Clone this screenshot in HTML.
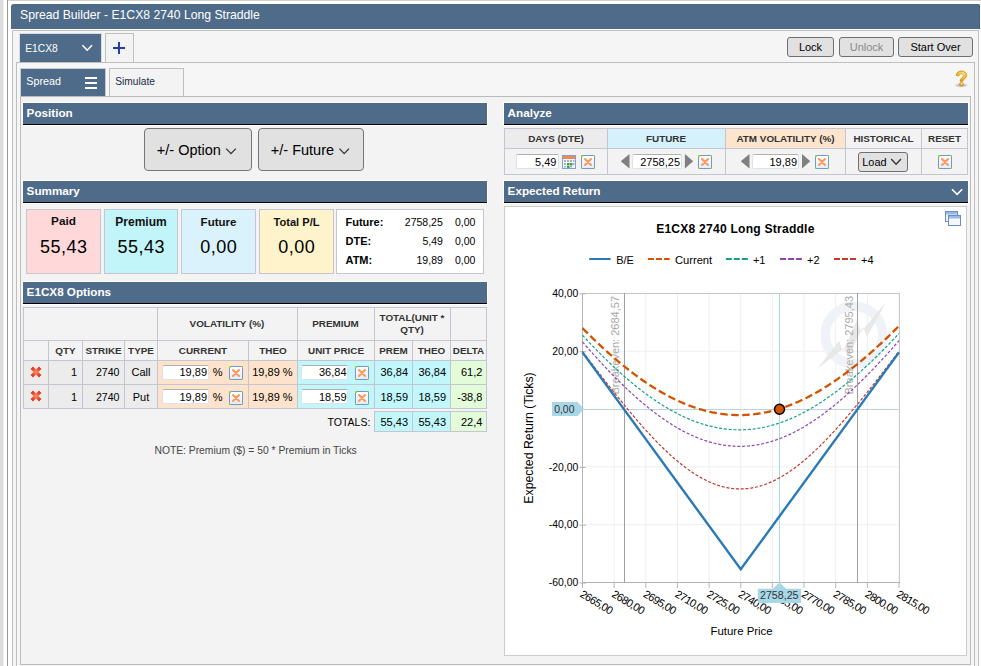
<!DOCTYPE html>
<html><head><meta charset="utf-8"><style>
html,body{margin:0;padding:0;width:981px;height:666px;overflow:hidden;font-family:'Liberation Sans', sans-serif;}
body{position:relative;}
</style></head><body>
<div style="position:absolute;left:0px;top:0px;width:981px;height:666px;background:#ffffff"></div>
<div style="position:absolute;left:0px;top:0px;width:3px;height:666px;background:#dcdcdc"></div>
<div style="position:absolute;left:3px;top:0px;width:1px;height:666px;background:#ececec"></div>
<div style="position:absolute;left:7px;top:0px;width:1px;height:666px;background:#9a9a9a"></div>
<div style="position:absolute;left:8px;top:0px;width:973px;height:1px;background:#d0d0d0"></div>
<div style="position:absolute;left:11px;top:4px;width:969px;height:25px;background:#4f6b8a;border-radius:3px 2px 0 0;box-shadow:inset -1px 0 0 #46607e"></div>
<div style="position:absolute;left:20px;top:8.97px;font-size:12.2px;line-height:12.2px;white-space:nowrap;color:#fff">Spread Builder - E1CX8 2740 Long Straddle</div>
<div style="position:absolute;left:12px;top:30px;width:965px;height:700px;background:#f5f5f5;border:1px solid #c0c0c0"></div>
<div style="position:absolute;left:19px;top:33px;width:81px;height:29px;background:#4f6b8a;border:1px solid #d8dde4;border-bottom:none"></div>
<div style="position:absolute;left:25.2px;top:43.88px;font-size:10.3px;line-height:10.3px;white-space:nowrap;color:#fff">E1CX8</div>
<svg style="position:absolute;left:0;top:0" width="981" height="666"><polyline points="82.4,45.3 87.2,50.2 92,45.3" fill="none" stroke="#fff" stroke-width="1.6"/></svg>
<div style="position:absolute;left:105px;top:33px;width:27px;height:29px;background:#f3f3f3;border:1px solid #c0c0c0;border-bottom:none"></div>
<div style="position:absolute;left:113px;top:47px;width:12px;height:2px;background:#1f3fae"></div>
<div style="position:absolute;left:118px;top:42px;width:2px;height:12px;background:#1f3fae"></div>
<div style="position:absolute;left:787px;top:37px;width:45px;height:18px;background:#e1e1e1;border:1px solid #707070;border-radius:3px"></div>
<div style="position:absolute;left:610.5px;width:400px;top:41.99px;font-size:11px;line-height:11px;white-space:nowrap;text-align:center;color:#000">Lock</div>
<div style="position:absolute;left:839px;top:37px;width:53px;height:18px;background:#e1e1e1;border:1px solid #707070;border-radius:3px"></div>
<div style="position:absolute;left:666.5px;width:400px;top:41.99px;font-size:11px;line-height:11px;white-space:nowrap;text-align:center;color:#8a8a8a">Unlock</div>
<div style="position:absolute;left:898px;top:37px;width:73px;height:18px;background:#e1e1e1;border:1px solid #707070;border-radius:3px"></div>
<div style="position:absolute;left:735.5px;width:400px;top:41.99px;font-size:11px;line-height:11px;white-space:nowrap;text-align:center;color:#000">Start Over</div>
<div style="position:absolute;left:16px;top:62px;width:957px;height:700px;background:#f6f6f6;border:1px solid #bebebe"></div>
<div style="position:absolute;left:20px;top:68px;width:86px;height:28px;background:#4f6b8a;border:1px solid #c8ccd2;border-bottom:none;box-sizing:border-box"></div>
<div style="position:absolute;left:26.3px;top:75.90px;font-size:10.75px;line-height:10.75px;white-space:nowrap;color:#fff">Spread</div>
<div style="position:absolute;left:85px;top:77px;width:12px;height:2px;background:#fff"></div>
<div style="position:absolute;left:85px;top:82px;width:12px;height:2px;background:#fff"></div>
<div style="position:absolute;left:85px;top:87px;width:12px;height:2px;background:#fff"></div>
<div style="position:absolute;left:109px;top:68px;width:73px;height:28px;background:#f3f3f3;border:1px solid #c0c0c0;border-bottom:none"></div>
<div style="position:absolute;left:115.3px;top:76.97px;font-size:10.2px;line-height:10.2px;white-space:nowrap;color:#1a2a48">Simulate</div>
<div style="position:absolute;left:20px;top:96px;width:949px;height:567px;background:#f3f3f3;border:1px solid #bbbbbb"></div>
<svg style="position:absolute;left:950px;top:68px" width="22" height="22" viewBox="0 0 22 22">
<defs><radialGradient id="hg" cx="0.6" cy="0.3" r="0.8"><stop offset="0" stop-color="#fff2b0"/><stop offset="0.45" stop-color="#f8c030"/><stop offset="1" stop-color="#e09000"/></radialGradient>
<radialGradient id="hs" cx="0.5" cy="0.5" r="0.5"><stop offset="0" stop-color="#b0b0b0"/><stop offset="0.6" stop-color="#d0d0d0"/><stop offset="1" stop-color="#f3f3f3" stop-opacity="0"/></radialGradient></defs>
<ellipse cx="11.2" cy="17.3" rx="8" ry="2.6" fill="url(#hs)"/>
<path d="M6.3 7.6 C6.3 4.6 8.6 3 11.3 3 C14.2 3 16.6 4.8 16.6 7.4 C16.6 10.2 13.4 10.8 12.8 13.2 L10 13.2 C10 10 13.6 9.4 13.6 7.6 C13.6 6.5 12.6 5.8 11.4 5.8 C10 5.8 9.2 6.6 9 7.8 Z" fill="url(#hg)" stroke="#c88400" stroke-width="0.7"/>
<circle cx="11.4" cy="16.2" r="1.8" fill="url(#hg)" stroke="#c88400" stroke-width="0.7"/>
</svg>
<div style="position:absolute;left:22px;top:102px;width:466px;height:24px;background:#fff"></div>
<div style="position:absolute;left:23px;top:103px;width:464px;height:21px;background:#4f6b8a"></div>
<div style="position:absolute;left:23px;top:124px;width:464px;height:1px;background:#000"></div>
<div style="position:absolute;left:26.6px;top:107.30px;font-size:11.7px;line-height:11.7px;white-space:nowrap;color:#fff;font-weight:bold">Position</div>
<div style="position:absolute;left:22px;top:180px;width:466px;height:24px;background:#fff"></div>
<div style="position:absolute;left:23px;top:181px;width:464px;height:21px;background:#4f6b8a"></div>
<div style="position:absolute;left:23px;top:202px;width:464px;height:1px;background:#000"></div>
<div style="position:absolute;left:26.6px;top:185.30px;font-size:11.7px;line-height:11.7px;white-space:nowrap;color:#fff;font-weight:bold">Summary</div>
<div style="position:absolute;left:22px;top:281px;width:466px;height:24px;background:#fff"></div>
<div style="position:absolute;left:23px;top:282px;width:464px;height:21px;background:#4f6b8a"></div>
<div style="position:absolute;left:23px;top:303px;width:464px;height:1px;background:#000"></div>
<div style="position:absolute;left:26.6px;top:286.30px;font-size:11.7px;line-height:11.7px;white-space:nowrap;color:#fff;font-weight:bold">E1CX8 Options</div>
<div style="position:absolute;left:503px;top:102px;width:466px;height:24px;background:#fff"></div>
<div style="position:absolute;left:504px;top:103px;width:464px;height:21px;background:#4f6b8a"></div>
<div style="position:absolute;left:504px;top:124px;width:464px;height:1px;background:#000"></div>
<div style="position:absolute;left:507.6px;top:107.30px;font-size:11.7px;line-height:11.7px;white-space:nowrap;color:#fff;font-weight:bold">Analyze</div>
<div style="position:absolute;left:503px;top:180px;width:466px;height:24px;background:#fff"></div>
<div style="position:absolute;left:504px;top:181px;width:464px;height:21px;background:#4f6b8a"></div>
<div style="position:absolute;left:504px;top:202px;width:464px;height:1px;background:#000"></div>
<div style="position:absolute;left:507.6px;top:185.30px;font-size:11.7px;line-height:11.7px;white-space:nowrap;color:#fff;font-weight:bold">Expected Return</div>
<svg style="position:absolute;left:0;top:0" width="981" height="666"><polyline points="952,189.2 957.1,194.4 962.2,189.2" fill="none" stroke="#fff" stroke-width="1.6"/></svg>
<div style="position:absolute;left:144px;top:128px;width:106px;height:41px;background:#e1e1e1;border:1px solid #767676;border-radius:4px"></div>
<div style="position:absolute;left:258px;top:128px;width:104px;height:41px;background:#e1e1e1;border:1px solid #767676;border-radius:4px"></div>
<div style="position:absolute;left:156.8px;top:143.13px;font-size:14.5px;line-height:14.5px;white-space:nowrap;color:#000">+/- Option</div>
<div style="position:absolute;left:270.8px;top:143.13px;font-size:14.5px;line-height:14.5px;white-space:nowrap;color:#000">+/- Future</div>
<svg style="position:absolute;left:0;top:0" width="981" height="666"><polyline points="226.2,148.6 231,153.6 235.8,148.6" fill="none" stroke="#333" stroke-width="1.3"/><polyline points="339.4,148.6 344.2,153.6 349,148.6" fill="none" stroke="#333" stroke-width="1.3"/></svg>
<div style="position:absolute;left:26px;top:209px;width:73px;height:63px;background:#ffd9d9;border:1px solid #c4c6d2"></div>
<div style="position:absolute;left:-136.5px;width:400px;top:216.31px;font-size:11.8px;line-height:11.8px;white-space:nowrap;text-align:center;color:#111;font-weight:bold">Paid</div>
<div style="position:absolute;left:-136.25px;width:400px;top:237.96px;font-size:18px;line-height:18px;white-space:nowrap;text-align:center;color:#000;letter-spacing:0.5px">55,43</div>
<div style="position:absolute;left:104px;top:209px;width:72px;height:63px;background:#c1f5fa;border:1px solid #c4c6d2"></div>
<div style="position:absolute;left:-59.0px;width:400px;top:216.14px;font-size:12px;line-height:12px;white-space:nowrap;text-align:center;color:#111;font-weight:bold">Premium</div>
<div style="position:absolute;left:-58.75px;width:400px;top:237.96px;font-size:18px;line-height:18px;white-space:nowrap;text-align:center;color:#000;letter-spacing:0.5px">55,43</div>
<div style="position:absolute;left:181px;top:209px;width:73px;height:63px;background:#d9f2fc;border:1px solid #c4c6d2"></div>
<div style="position:absolute;left:18.5px;width:400px;top:216.57px;font-size:11.5px;line-height:11.5px;white-space:nowrap;text-align:center;color:#111;font-weight:bold">Future</div>
<div style="position:absolute;left:18.75px;width:400px;top:237.96px;font-size:18px;line-height:18px;white-space:nowrap;text-align:center;color:#000;letter-spacing:0.5px">0,00</div>
<div style="position:absolute;left:259px;top:209px;width:73px;height:63px;background:#fff3cc;border:1px solid #c4c6d2"></div>
<div style="position:absolute;left:96.5px;width:400px;top:216.90px;font-size:11.1px;line-height:11.1px;white-space:nowrap;text-align:center;color:#111;font-weight:bold">Total P/L</div>
<div style="position:absolute;left:96.75px;width:400px;top:237.96px;font-size:18px;line-height:18px;white-space:nowrap;text-align:center;color:#000;letter-spacing:0.5px">0,00</div>
<div style="position:absolute;left:336px;top:209px;width:146px;height:63px;background:#fff;border:1px solid #c4c6d2"></div>
<div style="position:absolute;left:345.5px;top:216.59px;font-size:11px;line-height:11px;white-space:nowrap;color:#000;font-weight:bold">Future:</div>
<div style="position:absolute;right:538.2px;top:217.01px;font-size:10.5px;line-height:10.5px;white-space:nowrap;text-align:right;color:#000">2758,25</div>
<div style="position:absolute;right:505.6px;top:217.01px;font-size:10.5px;line-height:10.5px;white-space:nowrap;text-align:right;color:#000">0,00</div>
<div style="position:absolute;left:345.5px;top:235.69px;font-size:11px;line-height:11px;white-space:nowrap;color:#000;font-weight:bold">DTE:</div>
<div style="position:absolute;right:538.2px;top:236.11px;font-size:10.5px;line-height:10.5px;white-space:nowrap;text-align:right;color:#000">5,49</div>
<div style="position:absolute;right:505.6px;top:236.11px;font-size:10.5px;line-height:10.5px;white-space:nowrap;text-align:right;color:#000">0,00</div>
<div style="position:absolute;left:345.5px;top:254.79px;font-size:11px;line-height:11px;white-space:nowrap;color:#000;font-weight:bold">ATM:</div>
<div style="position:absolute;right:538.2px;top:255.21px;font-size:10.5px;line-height:10.5px;white-space:nowrap;text-align:right;color:#000">19,89</div>
<div style="position:absolute;right:505.6px;top:255.21px;font-size:10.5px;line-height:10.5px;white-space:nowrap;text-align:right;color:#000">0,00</div>
<div style="position:absolute;left:24px;top:308px;width:462px;height:32px;background:#f3f3f3"></div>
<div style="position:absolute;left:24px;top:341px;width:462px;height:19px;background:#f3f3f3"></div>
<div style="position:absolute;left:24px;top:361px;width:133px;height:47px;background:#ececec"></div>
<div style="position:absolute;left:158px;top:361px;width:139px;height:47px;background:#fde3cb"></div>
<div style="position:absolute;left:298px;top:361px;width:152px;height:47px;background:#c1f6fb"></div>
<div style="position:absolute;left:451px;top:361px;width:35px;height:47px;background:#e2fbd9"></div>
<div style="position:absolute;left:23px;top:307px;width:464px;height:1px;background:#c3c6d2"></div>
<div style="position:absolute;left:23px;top:340px;width:464px;height:1px;background:#c3c6d2"></div>
<div style="position:absolute;left:23px;top:360px;width:464px;height:1px;background:#c3c6d2"></div>
<div style="position:absolute;left:23px;top:384px;width:464px;height:1px;background:#c3c6d2"></div>
<div style="position:absolute;left:23px;top:408px;width:464px;height:1px;background:#c3c6d2"></div>
<div style="position:absolute;left:23px;top:307px;width:1px;height:102px;background:#c3c6d2"></div>
<div style="position:absolute;left:157px;top:307px;width:1px;height:102px;background:#c3c6d2"></div>
<div style="position:absolute;left:297px;top:307px;width:1px;height:102px;background:#c3c6d2"></div>
<div style="position:absolute;left:374px;top:307px;width:1px;height:102px;background:#c3c6d2"></div>
<div style="position:absolute;left:450px;top:307px;width:1px;height:102px;background:#c3c6d2"></div>
<div style="position:absolute;left:486px;top:307px;width:1px;height:102px;background:#c3c6d2"></div>
<div style="position:absolute;left:48px;top:340px;width:1px;height:69px;background:#c3c6d2"></div>
<div style="position:absolute;left:82px;top:340px;width:1px;height:69px;background:#c3c6d2"></div>
<div style="position:absolute;left:124px;top:340px;width:1px;height:69px;background:#c3c6d2"></div>
<div style="position:absolute;left:248px;top:340px;width:1px;height:69px;background:#c3c6d2"></div>
<div style="position:absolute;left:412px;top:340px;width:1px;height:69px;background:#c3c6d2"></div>
<div style="position:absolute;left:27px;width:400px;top:318.82px;font-size:9.9px;line-height:9.9px;white-space:nowrap;text-align:center;color:#333;font-weight:bold">VOLATILITY (%)</div>
<div style="position:absolute;left:135.5px;width:400px;top:318.82px;font-size:9.9px;line-height:9.9px;white-space:nowrap;text-align:center;color:#333;font-weight:bold">PREMIUM</div>
<div style="position:absolute;left:212px;width:400px;top:312.72px;font-size:9.9px;line-height:9.9px;white-space:nowrap;text-align:center;color:#333;font-weight:bold">TOTAL(UNIT *</div>
<div style="position:absolute;left:212px;width:400px;top:324.52px;font-size:9.9px;line-height:9.9px;white-space:nowrap;text-align:center;color:#333;font-weight:bold">QTY)</div>
<div style="position:absolute;left:-134.5px;width:400px;top:345.62px;font-size:9.9px;line-height:9.9px;white-space:nowrap;text-align:center;color:#333;font-weight:bold">QTY</div>
<div style="position:absolute;left:-96.5px;width:400px;top:345.62px;font-size:9.9px;line-height:9.9px;white-space:nowrap;text-align:center;color:#333;font-weight:bold">STRIKE</div>
<div style="position:absolute;left:-59.0px;width:400px;top:345.62px;font-size:9.9px;line-height:9.9px;white-space:nowrap;text-align:center;color:#333;font-weight:bold">TYPE</div>
<div style="position:absolute;left:3.0px;width:400px;top:345.62px;font-size:9.9px;line-height:9.9px;white-space:nowrap;text-align:center;color:#333;font-weight:bold">CURRENT</div>
<div style="position:absolute;left:73.0px;width:400px;top:345.62px;font-size:9.9px;line-height:9.9px;white-space:nowrap;text-align:center;color:#333;font-weight:bold">THEO</div>
<div style="position:absolute;left:136.0px;width:400px;top:345.62px;font-size:9.9px;line-height:9.9px;white-space:nowrap;text-align:center;color:#333;font-weight:bold">UNIT PRICE</div>
<div style="position:absolute;left:193.5px;width:400px;top:345.62px;font-size:9.9px;line-height:9.9px;white-space:nowrap;text-align:center;color:#333;font-weight:bold">PREM</div>
<div style="position:absolute;left:231.5px;width:400px;top:345.62px;font-size:9.9px;line-height:9.9px;white-space:nowrap;text-align:center;color:#333;font-weight:bold">THEO</div>
<div style="position:absolute;left:268.5px;width:400px;top:345.62px;font-size:9.9px;line-height:9.9px;white-space:nowrap;text-align:center;color:#333;font-weight:bold">DELTA</div>
<svg style="position:absolute;left:30px;top:366px" width="12" height="12" viewBox="0 0 12 12">
<defs><radialGradient id="rg" cx="0.5" cy="0.5" r="0.6"><stop offset="0" stop-color="#ff9070"/><stop offset="1" stop-color="#e03818"/></radialGradient></defs>
<path d="M1.8 1.8 L10.2 10.2 M10.2 1.8 L1.8 10.2" stroke="url(#rg)" stroke-width="3.4" stroke-linecap="butt"/>
</svg>
<div style="position:absolute;right:904px;top:366.99px;font-size:11px;line-height:11px;white-space:nowrap;text-align:right;color:#000">1</div>
<div style="position:absolute;right:861.5px;top:367.33px;font-size:10.6px;line-height:10.6px;white-space:nowrap;text-align:right;color:#000">2740</div>
<div style="position:absolute;left:-59px;width:400px;top:366.99px;font-size:11px;line-height:11px;white-space:nowrap;text-align:center;color:#000">Call</div>
<div style="position:absolute;left:162px;top:365px;width:45px;height:13px;background:#fff;border:1px solid #dde2ea;border-top-color:#b0b0b0;border-radius:2px"></div>
<div style="position:absolute;right:774px;top:366.99px;font-size:11px;line-height:11px;white-space:nowrap;text-align:right;color:#000">19,89</div>
<div style="position:absolute;left:212.8px;top:366.99px;font-size:11px;line-height:11px;white-space:nowrap;color:#000">%</div>
<svg style="position:absolute;left:229px;top:366px" width="14" height="14" viewBox="0 0 14 14">
<defs><linearGradient id="xg" x1="0" y1="0" x2="0" y2="1"><stop offset="0" stop-color="#ffffff"/><stop offset="1" stop-color="#e4ecf8"/></linearGradient></defs>
<rect x="0.5" y="0.5" width="13" height="13" fill="url(#xg)" stroke="#6f98da" stroke-width="1"/>
<rect x="0" y="0" width="2" height="2" fill="#a8d820"/><rect x="12.6" y="0" width="1.4" height="1.4" fill="#a8d820"/><rect x="0" y="12.6" width="1.4" height="1.4" fill="#a8d820"/><rect x="12.6" y="12.6" width="1.4" height="1.4" fill="#a8d820"/>
<path d="M4 4 L10 10 M10 4 L4 10" stroke="#fd9858" stroke-width="2.1" stroke-linecap="round"/>
</svg>
<div style="position:absolute;right:688.4px;top:366.99px;font-size:11px;line-height:11px;white-space:nowrap;text-align:right;color:#000">19,89 %</div>
<div style="position:absolute;left:301px;top:365px;width:45px;height:13px;background:#fff;border:1px solid #dde2ea;border-top-color:#b0b0b0;border-radius:2px"></div>
<div style="position:absolute;right:634.5px;top:366.99px;font-size:11px;line-height:11px;white-space:nowrap;text-align:right;color:#000">36,84</div>
<svg style="position:absolute;left:355px;top:366px" width="14" height="14" viewBox="0 0 14 14">
<defs><linearGradient id="xg" x1="0" y1="0" x2="0" y2="1"><stop offset="0" stop-color="#ffffff"/><stop offset="1" stop-color="#e4ecf8"/></linearGradient></defs>
<rect x="0.5" y="0.5" width="13" height="13" fill="url(#xg)" stroke="#6f98da" stroke-width="1"/>
<rect x="0" y="0" width="2" height="2" fill="#a8d820"/><rect x="12.6" y="0" width="1.4" height="1.4" fill="#a8d820"/><rect x="0" y="12.6" width="1.4" height="1.4" fill="#a8d820"/><rect x="12.6" y="12.6" width="1.4" height="1.4" fill="#a8d820"/>
<path d="M4 4 L10 10 M10 4 L4 10" stroke="#fd9858" stroke-width="2.1" stroke-linecap="round"/>
</svg>
<div style="position:absolute;right:573px;top:366.99px;font-size:11px;line-height:11px;white-space:nowrap;text-align:right;color:#000">36,84</div>
<div style="position:absolute;right:535px;top:366.99px;font-size:11px;line-height:11px;white-space:nowrap;text-align:right;color:#000">36,84</div>
<div style="position:absolute;right:498.6px;top:366.99px;font-size:11px;line-height:11px;white-space:nowrap;text-align:right;color:#000">61,2</div>
<svg style="position:absolute;left:30px;top:390px" width="12" height="12" viewBox="0 0 12 12">
<defs><radialGradient id="rg" cx="0.5" cy="0.5" r="0.6"><stop offset="0" stop-color="#ff9070"/><stop offset="1" stop-color="#e03818"/></radialGradient></defs>
<path d="M1.8 1.8 L10.2 10.2 M10.2 1.8 L1.8 10.2" stroke="url(#rg)" stroke-width="3.4" stroke-linecap="butt"/>
</svg>
<div style="position:absolute;right:904px;top:391.69px;font-size:11px;line-height:11px;white-space:nowrap;text-align:right;color:#000">1</div>
<div style="position:absolute;right:861.5px;top:392.03px;font-size:10.6px;line-height:10.6px;white-space:nowrap;text-align:right;color:#000">2740</div>
<div style="position:absolute;left:-59px;width:400px;top:391.69px;font-size:11px;line-height:11px;white-space:nowrap;text-align:center;color:#000">Put</div>
<div style="position:absolute;left:162px;top:389px;width:45px;height:13px;background:#fff;border:1px solid #dde2ea;border-top-color:#b0b0b0;border-radius:2px"></div>
<div style="position:absolute;right:774px;top:391.69px;font-size:11px;line-height:11px;white-space:nowrap;text-align:right;color:#000">19,89</div>
<div style="position:absolute;left:212.8px;top:391.69px;font-size:11px;line-height:11px;white-space:nowrap;color:#000">%</div>
<svg style="position:absolute;left:229px;top:391px" width="14" height="14" viewBox="0 0 14 14">
<defs><linearGradient id="xg" x1="0" y1="0" x2="0" y2="1"><stop offset="0" stop-color="#ffffff"/><stop offset="1" stop-color="#e4ecf8"/></linearGradient></defs>
<rect x="0.5" y="0.5" width="13" height="13" fill="url(#xg)" stroke="#6f98da" stroke-width="1"/>
<rect x="0" y="0" width="2" height="2" fill="#a8d820"/><rect x="12.6" y="0" width="1.4" height="1.4" fill="#a8d820"/><rect x="0" y="12.6" width="1.4" height="1.4" fill="#a8d820"/><rect x="12.6" y="12.6" width="1.4" height="1.4" fill="#a8d820"/>
<path d="M4 4 L10 10 M10 4 L4 10" stroke="#fd9858" stroke-width="2.1" stroke-linecap="round"/>
</svg>
<div style="position:absolute;right:688.4px;top:391.69px;font-size:11px;line-height:11px;white-space:nowrap;text-align:right;color:#000">19,89 %</div>
<div style="position:absolute;left:301px;top:389px;width:45px;height:13px;background:#fff;border:1px solid #dde2ea;border-top-color:#b0b0b0;border-radius:2px"></div>
<div style="position:absolute;right:634.5px;top:391.69px;font-size:11px;line-height:11px;white-space:nowrap;text-align:right;color:#000">18,59</div>
<svg style="position:absolute;left:355px;top:391px" width="14" height="14" viewBox="0 0 14 14">
<defs><linearGradient id="xg" x1="0" y1="0" x2="0" y2="1"><stop offset="0" stop-color="#ffffff"/><stop offset="1" stop-color="#e4ecf8"/></linearGradient></defs>
<rect x="0.5" y="0.5" width="13" height="13" fill="url(#xg)" stroke="#6f98da" stroke-width="1"/>
<rect x="0" y="0" width="2" height="2" fill="#a8d820"/><rect x="12.6" y="0" width="1.4" height="1.4" fill="#a8d820"/><rect x="0" y="12.6" width="1.4" height="1.4" fill="#a8d820"/><rect x="12.6" y="12.6" width="1.4" height="1.4" fill="#a8d820"/>
<path d="M4 4 L10 10 M10 4 L4 10" stroke="#fd9858" stroke-width="2.1" stroke-linecap="round"/>
</svg>
<div style="position:absolute;right:573px;top:391.69px;font-size:11px;line-height:11px;white-space:nowrap;text-align:right;color:#000">18,59</div>
<div style="position:absolute;right:535px;top:391.69px;font-size:11px;line-height:11px;white-space:nowrap;text-align:right;color:#000">18,59</div>
<div style="position:absolute;right:498.6px;top:391.69px;font-size:11px;line-height:11px;white-space:nowrap;text-align:right;color:#000">-38,8</div>
<div style="position:absolute;left:374px;top:411px;width:113px;height:21px;background:#c3c6d2"></div>
<div style="position:absolute;left:375px;top:412px;width:37px;height:19px;background:#c1f6fb"></div>
<div style="position:absolute;left:413px;top:412px;width:37px;height:19px;background:#c1f6fb"></div>
<div style="position:absolute;left:451px;top:412px;width:35px;height:19px;background:#e2fbd9"></div>
<div style="position:absolute;right:610.7px;top:417.41px;font-size:10.5px;line-height:10.5px;white-space:nowrap;text-align:right;color:#000">TOTALS:</div>
<div style="position:absolute;right:573px;top:417.09px;font-size:11px;line-height:11px;white-space:nowrap;text-align:right;color:#000">55,43</div>
<div style="position:absolute;right:535px;top:417.09px;font-size:11px;line-height:11px;white-space:nowrap;text-align:right;color:#000">55,43</div>
<div style="position:absolute;right:498.6px;top:417.09px;font-size:11px;line-height:11px;white-space:nowrap;text-align:right;color:#000">22,4</div>
<div style="position:absolute;left:154.5px;top:445.78px;font-size:10.3px;line-height:10.3px;white-space:nowrap;color:#444">NOTE: Premium ($) = 50 * Premium in Ticks</div>
<div style="position:absolute;left:505px;top:129px;width:102px;height:19px;background:#ececec"></div>
<div style="position:absolute;left:608px;top:129px;width:117px;height:19px;background:#d5f1fc"></div>
<div style="position:absolute;left:726px;top:129px;width:119px;height:19px;background:#fde4cc"></div>
<div style="position:absolute;left:846px;top:129px;width:75px;height:19px;background:#f3f3f3"></div>
<div style="position:absolute;left:922px;top:129px;width:45px;height:19px;background:#f3f3f3"></div>
<div style="position:absolute;left:505px;top:149px;width:462px;height:25px;background:#f3f3f3"></div>
<div style="position:absolute;left:504px;top:128px;width:464px;height:1px;background:#c3c6d2"></div>
<div style="position:absolute;left:504px;top:148px;width:464px;height:1px;background:#c3c6d2"></div>
<div style="position:absolute;left:504px;top:174px;width:464px;height:1px;background:#c3c6d2"></div>
<div style="position:absolute;left:504px;top:128px;width:1px;height:47px;background:#c3c6d2"></div>
<div style="position:absolute;left:607px;top:128px;width:1px;height:47px;background:#c3c6d2"></div>
<div style="position:absolute;left:725px;top:128px;width:1px;height:47px;background:#c3c6d2"></div>
<div style="position:absolute;left:845px;top:128px;width:1px;height:47px;background:#c3c6d2"></div>
<div style="position:absolute;left:921px;top:128px;width:1px;height:47px;background:#c3c6d2"></div>
<div style="position:absolute;left:967px;top:128px;width:1px;height:47px;background:#c3c6d2"></div>
<div style="position:absolute;left:356px;width:400px;top:134.22px;font-size:9.9px;line-height:9.9px;white-space:nowrap;text-align:center;color:#333;font-weight:bold">DAYS (DTE)</div>
<div style="position:absolute;left:466px;width:400px;top:134.22px;font-size:9.9px;line-height:9.9px;white-space:nowrap;text-align:center;color:#333;font-weight:bold">FUTURE</div>
<div style="position:absolute;left:585.5px;width:400px;top:134.22px;font-size:9.9px;line-height:9.9px;white-space:nowrap;text-align:center;color:#333;font-weight:bold">ATM VOLATILITY (%)</div>
<div style="position:absolute;left:683.5px;width:400px;top:134.22px;font-size:9.9px;line-height:9.9px;white-space:nowrap;text-align:center;color:#333;font-weight:bold">HISTORICAL</div>
<div style="position:absolute;left:744.5px;width:400px;top:134.22px;font-size:9.9px;line-height:9.9px;white-space:nowrap;text-align:center;color:#333;font-weight:bold">RESET</div>
<div style="position:absolute;left:516px;top:154px;width:41px;height:13px;background:#fff;border:1px solid #dde2ea;border-top-color:#b0b0b0;border-radius:2px"></div>
<div style="position:absolute;right:424.5px;top:156.99px;font-size:11px;line-height:11px;white-space:nowrap;text-align:right;color:#000">5,49</div>
<svg style="position:absolute;left:562px;top:155px" width="14" height="14" viewBox="0 0 14 14">
<rect x="0.5" y="0.5" width="13" height="13" fill="#f4f8fc" stroke="#7f9fd6"/>
<rect x="1" y="1" width="12" height="3" fill="#f08850"/>
<g fill="#a0b0c8"><rect x="2" y="5" width="2" height="2"/><rect x="5" y="5" width="2" height="2"/><rect x="8" y="5" width="2" height="2"/><rect x="11" y="5" width="1.5" height="2"/>
<rect x="2" y="8" width="2" height="2"/><rect x="11" y="8" width="1.5" height="2"/><rect x="2" y="11" width="2" height="1.5"/><rect x="8" y="11" width="2" height="1.5"/></g>
<g fill="#40a040"><rect x="5" y="8" width="2.5" height="2.5"/><rect x="8" y="8" width="2.5" height="2.5"/><rect x="5" y="11" width="2.5" height="2"/></g>
</svg>
<svg style="position:absolute;left:581px;top:155px" width="14" height="14" viewBox="0 0 14 14">
<defs><linearGradient id="xg" x1="0" y1="0" x2="0" y2="1"><stop offset="0" stop-color="#ffffff"/><stop offset="1" stop-color="#e4ecf8"/></linearGradient></defs>
<rect x="0.5" y="0.5" width="13" height="13" fill="url(#xg)" stroke="#6f98da" stroke-width="1"/>
<rect x="0" y="0" width="2" height="2" fill="#a8d820"/><rect x="12.6" y="0" width="1.4" height="1.4" fill="#a8d820"/><rect x="0" y="12.6" width="1.4" height="1.4" fill="#a8d820"/><rect x="12.6" y="12.6" width="1.4" height="1.4" fill="#a8d820"/>
<path d="M4 4 L10 10 M10 4 L4 10" stroke="#fd9858" stroke-width="2.1" stroke-linecap="round"/>
</svg>
<svg style="position:absolute;left:0;top:0" width="981" height="666">
<polygon points="629.5,154 629.5,168.5 620.7,161.2" fill="#808080"/>
<polygon points="684.9,154 684.9,168.5 693.2,161.2" fill="#808080"/>
<polygon points="749.5,154 749.5,168.5 740.7,161.2" fill="#808080"/>
<polygon points="802,154 802,168.5 810.3,161.2" fill="#808080"/>
</svg>
<div style="position:absolute;left:632px;top:154px;width:48px;height:13px;background:#fff;border:1px solid #dde2ea;border-top-color:#b0b0b0;border-radius:2px"></div>
<div style="position:absolute;right:301px;top:156.99px;font-size:11px;line-height:11px;white-space:nowrap;text-align:right;color:#000">2758,25</div>
<svg style="position:absolute;left:698px;top:155px" width="14" height="14" viewBox="0 0 14 14">
<defs><linearGradient id="xg" x1="0" y1="0" x2="0" y2="1"><stop offset="0" stop-color="#ffffff"/><stop offset="1" stop-color="#e4ecf8"/></linearGradient></defs>
<rect x="0.5" y="0.5" width="13" height="13" fill="url(#xg)" stroke="#6f98da" stroke-width="1"/>
<rect x="0" y="0" width="2" height="2" fill="#a8d820"/><rect x="12.6" y="0" width="1.4" height="1.4" fill="#a8d820"/><rect x="0" y="12.6" width="1.4" height="1.4" fill="#a8d820"/><rect x="12.6" y="12.6" width="1.4" height="1.4" fill="#a8d820"/>
<path d="M4 4 L10 10 M10 4 L4 10" stroke="#fd9858" stroke-width="2.1" stroke-linecap="round"/>
</svg>
<div style="position:absolute;left:752px;top:154px;width:45px;height:13px;background:#fff;border:1px solid #dde2ea;border-top-color:#b0b0b0;border-radius:2px"></div>
<div style="position:absolute;right:184px;top:156.99px;font-size:11px;line-height:11px;white-space:nowrap;text-align:right;color:#000">19,89</div>
<svg style="position:absolute;left:815px;top:155px" width="14" height="14" viewBox="0 0 14 14">
<defs><linearGradient id="xg" x1="0" y1="0" x2="0" y2="1"><stop offset="0" stop-color="#ffffff"/><stop offset="1" stop-color="#e4ecf8"/></linearGradient></defs>
<rect x="0.5" y="0.5" width="13" height="13" fill="url(#xg)" stroke="#6f98da" stroke-width="1"/>
<rect x="0" y="0" width="2" height="2" fill="#a8d820"/><rect x="12.6" y="0" width="1.4" height="1.4" fill="#a8d820"/><rect x="0" y="12.6" width="1.4" height="1.4" fill="#a8d820"/><rect x="12.6" y="12.6" width="1.4" height="1.4" fill="#a8d820"/>
<path d="M4 4 L10 10 M10 4 L4 10" stroke="#fd9858" stroke-width="2.1" stroke-linecap="round"/>
</svg>
<div style="position:absolute;left:858px;top:152px;width:48px;height:18px;background:#e1e1e1;border:1px solid #707070;border-radius:3px"></div>
<div style="position:absolute;left:862.3px;top:156.57px;font-size:10.9px;line-height:10.9px;white-space:nowrap;color:#000">Load</div>
<svg style="position:absolute;left:0;top:0" width="981" height="666"><polyline points="891.2,159 896.1,164.2 901,159" fill="none" stroke="#333" stroke-width="1.3"/></svg>
<svg style="position:absolute;left:938px;top:155px" width="14" height="14" viewBox="0 0 14 14">
<defs><linearGradient id="xg" x1="0" y1="0" x2="0" y2="1"><stop offset="0" stop-color="#ffffff"/><stop offset="1" stop-color="#e4ecf8"/></linearGradient></defs>
<rect x="0.5" y="0.5" width="13" height="13" fill="url(#xg)" stroke="#6f98da" stroke-width="1"/>
<rect x="0" y="0" width="2" height="2" fill="#a8d820"/><rect x="12.6" y="0" width="1.4" height="1.4" fill="#a8d820"/><rect x="0" y="12.6" width="1.4" height="1.4" fill="#a8d820"/><rect x="12.6" y="12.6" width="1.4" height="1.4" fill="#a8d820"/>
<path d="M4 4 L10 10 M10 4 L4 10" stroke="#fd9858" stroke-width="2.1" stroke-linecap="round"/>
</svg>
<div style="position:absolute;left:504px;top:206px;width:461px;height:448px;background:#fff;border:1px solid #cccccc"></div>
<svg style="position:absolute;left:0;top:0" width="981" height="666" font-family="Liberation Sans, sans-serif"><line x1="582.50" y1="293" x2="582.50" y2="582.5" stroke="#efefef" stroke-width="1"/><line x1="614.15" y1="293" x2="614.15" y2="582.5" stroke="#efefef" stroke-width="1"/><line x1="645.80" y1="293" x2="645.80" y2="582.5" stroke="#efefef" stroke-width="1"/><line x1="677.45" y1="293" x2="677.45" y2="582.5" stroke="#efefef" stroke-width="1"/><line x1="709.10" y1="293" x2="709.10" y2="582.5" stroke="#efefef" stroke-width="1"/><line x1="740.75" y1="293" x2="740.75" y2="582.5" stroke="#efefef" stroke-width="1"/><line x1="772.40" y1="293" x2="772.40" y2="582.5" stroke="#efefef" stroke-width="1"/><line x1="804.05" y1="293" x2="804.05" y2="582.5" stroke="#efefef" stroke-width="1"/><line x1="835.70" y1="293" x2="835.70" y2="582.5" stroke="#efefef" stroke-width="1"/><line x1="867.35" y1="293" x2="867.35" y2="582.5" stroke="#efefef" stroke-width="1"/><line x1="899.00" y1="293" x2="899.00" y2="582.5" stroke="#efefef" stroke-width="1"/><line x1="582.5" y1="293.32" x2="899" y2="293.32" stroke="#efefef" stroke-width="1"/><line x1="582.5" y1="351.16" x2="899" y2="351.16" stroke="#efefef" stroke-width="1"/><line x1="582.5" y1="466.84" x2="899" y2="466.84" stroke="#efefef" stroke-width="1"/><line x1="582.5" y1="524.68" x2="899" y2="524.68" stroke="#efefef" stroke-width="1"/><g><circle cx="854" cy="335" r="28.8" fill="none" stroke="#eff2f6" stroke-width="9.5"/><path d="M817 369 L839 341 L843 351 L857 320 L861 332 L886 302 L867 337 L863 327 L848 357 L844 348 Z" fill="#e8e8e8"/></g><line x1="582.5" y1="293.5" x2="899.5" y2="293.5" stroke="#c8c8c8" stroke-width="1"/><line x1="899.5" y1="293" x2="899.5" y2="583" stroke="#c8c8c8" stroke-width="1"/><line x1="582.5" y1="293" x2="582.5" y2="583" stroke="#b4b4b4" stroke-width="1"/><line x1="582" y1="582.5" x2="900" y2="582.5" stroke="#b4b4b4" stroke-width="1"/><line x1="582.50" y1="582.5" x2="582.50" y2="588" stroke="#b4b4b4" stroke-width="1"/><line x1="614.15" y1="582.5" x2="614.15" y2="588" stroke="#b4b4b4" stroke-width="1"/><line x1="645.80" y1="582.5" x2="645.80" y2="588" stroke="#b4b4b4" stroke-width="1"/><line x1="677.45" y1="582.5" x2="677.45" y2="588" stroke="#b4b4b4" stroke-width="1"/><line x1="709.10" y1="582.5" x2="709.10" y2="588" stroke="#b4b4b4" stroke-width="1"/><line x1="740.75" y1="582.5" x2="740.75" y2="588" stroke="#b4b4b4" stroke-width="1"/><line x1="772.40" y1="582.5" x2="772.40" y2="588" stroke="#b4b4b4" stroke-width="1"/><line x1="804.05" y1="582.5" x2="804.05" y2="588" stroke="#b4b4b4" stroke-width="1"/><line x1="835.70" y1="582.5" x2="835.70" y2="588" stroke="#b4b4b4" stroke-width="1"/><line x1="867.35" y1="582.5" x2="867.35" y2="588" stroke="#b4b4b4" stroke-width="1"/><line x1="899.00" y1="582.5" x2="899.00" y2="588" stroke="#b4b4b4" stroke-width="1"/><line x1="579.5" y1="293.82" x2="586" y2="293.82" stroke="#b4b4b4" stroke-width="1"/><line x1="579.5" y1="351.66" x2="586" y2="351.66" stroke="#b4b4b4" stroke-width="1"/><line x1="579.5" y1="409.50" x2="586" y2="409.50" stroke="#b4b4b4" stroke-width="1"/><line x1="579.5" y1="467.34" x2="586" y2="467.34" stroke="#b4b4b4" stroke-width="1"/><line x1="579.5" y1="525.18" x2="586" y2="525.18" stroke="#b4b4b4" stroke-width="1"/><line x1="579.5" y1="583.02" x2="586" y2="583.02" stroke="#b4b4b4" stroke-width="1"/><line x1="624.5" y1="293" x2="624.5" y2="583" stroke="#a0a0a0" stroke-width="1"/><line x1="857.5" y1="293" x2="857.5" y2="583" stroke="#a0a0a0" stroke-width="1"/><line x1="779.5" y1="293" x2="779.5" y2="583" stroke="#a8d8e8" stroke-width="1"/><line x1="583" y1="409.5" x2="899" y2="409.5" stroke="#d0d0d0" stroke-width="1"/><line x1="583" y1="409.5" x2="899" y2="409.5" stroke="#a8d8e8" stroke-width="1" stroke-dasharray="2,2"/><text transform="translate(618.5,296) rotate(-90)" text-anchor="end" font-size="11" fill="#aaaaaa">Breakeven: 2684,57</text><text transform="translate(852.5,296) rotate(-90)" text-anchor="end" font-size="11" fill="#aaaaaa">Breakeven: 2795,43</text><polyline points="582.50,351.39 583.55,352.79 584.61,354.19 585.66,355.59 586.72,356.99 587.77,358.38 588.83,359.78 589.88,361.17 590.94,362.56 592.00,363.95 593.05,365.33 594.11,366.72 595.16,368.10 596.22,369.48 597.27,370.85 598.33,372.23 599.38,373.60 600.43,374.97 601.49,376.34 602.54,377.70 603.60,379.06 604.65,380.42 605.71,381.77 606.76,383.13 607.82,384.48 608.88,385.82 609.93,387.16 610.99,388.50 612.04,389.84 613.10,391.17 614.15,392.50 615.21,393.82 616.26,395.15 617.32,396.46 618.37,397.78 619.42,399.08 620.48,400.39 621.53,401.69 622.59,402.98 623.64,404.28 624.70,405.56 625.75,406.84 626.81,408.12 627.87,409.39 628.92,410.66 629.98,411.92 631.03,413.18 632.09,414.43 633.14,415.67 634.20,416.91 635.25,418.14 636.30,419.37 637.36,420.59 638.41,421.81 639.47,423.02 640.52,424.22 641.58,425.41 642.63,426.60 643.69,427.79 644.75,428.96 645.80,430.13 646.86,431.29 647.91,432.44 648.97,433.59 650.02,434.73 651.08,435.86 652.13,436.98 653.18,438.09 654.24,439.20 655.29,440.30 656.35,441.39 657.40,442.47 658.46,443.54 659.51,444.60 660.57,445.66 661.62,446.70 662.68,447.73 663.74,448.76 664.79,449.78 665.85,450.78 666.90,451.78 667.96,452.76 669.01,453.74 670.07,454.70 671.12,455.66 672.17,456.60 673.23,457.54 674.28,458.46 675.34,459.37 676.39,460.27 677.45,461.16 678.50,462.03 679.56,462.90 680.62,463.75 681.67,464.59 682.73,465.42 683.78,466.24 684.84,467.04 685.89,467.83 686.94,468.61 688.00,469.38 689.06,470.13 690.11,470.87 691.16,471.60 692.22,472.31 693.27,473.01 694.33,473.70 695.38,474.37 696.44,475.03 697.50,475.67 698.55,476.30 699.61,476.92 700.66,477.52 701.72,478.11 702.77,478.69 703.83,479.24 704.88,479.79 705.93,480.32 706.99,480.83 708.04,481.33 709.10,481.82 710.15,482.28 711.21,482.74 712.26,483.18 713.32,483.60 714.38,484.01 715.43,484.40 716.49,484.77 717.54,485.13 718.60,485.48 719.65,485.81 720.71,486.12 721.76,486.42 722.82,486.70 723.87,486.96 724.92,487.21 725.98,487.44 727.03,487.65 728.09,487.85 729.14,488.04 730.20,488.20 731.25,488.35 732.31,488.49 733.37,488.60 734.42,488.70 735.48,488.79 736.53,488.85 737.59,488.90 738.64,488.94 739.69,488.96 740.75,488.96 741.81,488.94 742.86,488.91 743.91,488.86 744.97,488.80 746.02,488.71 747.08,488.62 748.13,488.50 749.19,488.37 750.25,488.22 751.30,488.06 752.36,487.88 753.41,487.68 754.47,487.47 755.52,487.24 756.58,486.99 757.63,486.73 758.68,486.45 759.74,486.16 760.79,485.85 761.85,485.53 762.90,485.18 763.96,484.83 765.01,484.45 766.07,484.07 767.12,483.66 768.18,483.24 769.24,482.81 770.29,482.36 771.35,481.89 772.40,481.41 773.46,480.92 774.51,480.41 775.57,479.89 776.62,479.35 777.67,478.79 778.73,478.22 779.78,477.64 780.84,477.04 781.89,476.43 782.95,475.81 784.00,475.17 785.06,474.52 786.12,473.85 787.17,473.17 788.23,472.48 789.28,471.77 790.34,471.05 791.39,470.32 792.44,469.57 793.50,468.81 794.56,468.04 795.61,467.26 796.66,466.46 797.72,465.65 798.77,464.83 799.83,464.00 800.88,463.15 801.94,462.30 803.00,461.43 804.05,460.55 805.11,459.66 806.16,458.76 807.22,457.84 808.27,456.92 809.33,455.99 810.38,455.04 811.43,454.09 812.49,453.12 813.54,452.14 814.60,451.16 815.65,450.16 816.71,449.16 817.76,448.14 818.82,447.12 819.88,446.08 820.93,445.04 821.99,443.99 823.04,442.93 824.10,441.86 825.15,440.78 826.21,439.69 827.26,438.60 828.32,437.50 829.37,436.39 830.42,435.27 831.48,434.14 832.53,433.00 833.59,431.86 834.64,430.71 835.70,429.56 836.75,428.39 837.81,427.22 838.87,426.05 839.92,424.86 840.98,423.67 842.03,422.47 843.09,421.27 844.14,420.06 845.19,418.84 846.25,417.62 847.31,416.39 848.36,415.16 849.41,413.92 850.47,412.68 851.52,411.43 852.58,410.17 853.63,408.91 854.69,407.64 855.75,406.37 856.80,405.10 857.86,403.82 858.91,402.53 859.96,401.24 861.02,399.95 862.08,398.65 863.13,397.35 864.18,396.04 865.24,394.73 866.30,393.42 867.35,392.10 868.40,390.78 869.46,389.45 870.51,388.12 871.57,386.79 872.62,385.46 873.68,384.12 874.74,382.77 875.79,381.43 876.85,380.08 877.90,378.73 878.95,377.37 880.01,376.02 881.07,374.66 882.12,373.29 883.17,371.93 884.23,370.56 885.29,369.19 886.34,367.81 887.39,366.44 888.45,365.06 889.50,363.68 890.56,362.30 891.62,360.92 892.67,359.53 893.73,358.14 894.78,356.75 895.84,355.36 896.89,353.96 897.94,352.57 899.00,351.17" fill="none" stroke="#c0392b" stroke-width="1.2" stroke-dasharray="3,1.8"/><polyline points="582.50,341.90 583.55,343.12 584.61,344.34 585.66,345.54 586.72,346.75 587.77,347.95 588.83,349.15 589.88,350.34 590.94,351.53 592.00,352.71 593.05,353.89 594.11,355.06 595.16,356.23 596.22,357.40 597.27,358.56 598.33,359.71 599.38,360.86 600.43,362.01 601.49,363.15 602.54,364.28 603.60,365.41 604.65,366.53 605.71,367.65 606.76,368.77 607.82,369.87 608.88,370.98 609.93,372.07 610.99,373.17 612.04,374.25 613.10,375.33 614.15,376.41 615.21,377.47 616.26,378.54 617.32,379.59 618.37,380.64 619.42,381.69 620.48,382.73 621.53,383.76 622.59,384.79 623.64,385.80 624.70,386.82 625.75,387.82 626.81,388.82 627.87,389.82 628.92,390.80 629.98,391.78 631.03,392.76 632.09,393.72 633.14,394.68 634.20,395.64 635.25,396.58 636.30,397.52 637.36,398.45 638.41,399.37 639.47,400.29 640.52,401.20 641.58,402.10 642.63,403.00 643.69,403.88 644.75,404.76 645.80,405.63 646.86,406.50 647.91,407.35 648.97,408.20 650.02,409.04 651.08,409.87 652.13,410.70 653.18,411.51 654.24,412.32 655.29,413.12 656.35,413.91 657.40,414.70 658.46,415.47 659.51,416.24 660.57,417.00 661.62,417.75 662.68,418.49 663.74,419.22 664.79,419.94 665.85,420.66 666.90,421.36 667.96,422.06 669.01,422.75 670.07,423.43 671.12,424.10 672.17,424.76 673.23,425.41 674.28,426.05 675.34,426.69 676.39,427.31 677.45,427.93 678.50,428.53 679.56,429.13 680.62,429.71 681.67,430.29 682.73,430.86 683.78,431.42 684.84,431.97 685.89,432.50 686.94,433.03 688.00,433.55 689.06,434.06 690.11,434.56 691.16,435.05 692.22,435.53 693.27,436.00 694.33,436.46 695.38,436.91 696.44,437.35 697.50,437.78 698.55,438.20 699.61,438.61 700.66,439.00 701.72,439.39 702.77,439.77 703.83,440.14 704.88,440.50 705.93,440.84 706.99,441.18 708.04,441.51 709.10,441.82 710.15,442.13 711.21,442.42 712.26,442.71 713.32,442.98 714.38,443.24 715.43,443.50 716.49,443.74 717.54,443.97 718.60,444.19 719.65,444.40 720.71,444.60 721.76,444.79 722.82,444.97 723.87,445.13 724.92,445.29 725.98,445.43 727.03,445.57 728.09,445.69 729.14,445.81 730.20,445.91 731.25,446.00 732.31,446.08 733.37,446.15 734.42,446.21 735.48,446.26 736.53,446.30 737.59,446.32 738.64,446.34 739.69,446.34 740.75,446.34 741.81,446.32 742.86,446.29 743.91,446.26 744.97,446.21 746.02,446.15 747.08,446.08 748.13,445.99 749.19,445.90 750.25,445.80 751.30,445.69 752.36,445.56 753.41,445.43 754.47,445.28 755.52,445.12 756.58,444.96 757.63,444.78 758.68,444.59 759.74,444.39 760.79,444.18 761.85,443.96 762.90,443.73 763.96,443.49 765.01,443.23 766.07,442.97 767.12,442.70 768.18,442.41 769.24,442.12 770.29,441.82 771.35,441.50 772.40,441.18 773.46,440.84 774.51,440.49 775.57,440.14 776.62,439.77 777.67,439.39 778.73,439.01 779.78,438.61 780.84,438.20 781.89,437.79 782.95,437.36 784.00,436.92 785.06,436.48 786.12,436.02 787.17,435.55 788.23,435.08 789.28,434.59 790.34,434.09 791.39,433.59 792.44,433.07 793.50,432.55 794.56,432.01 795.61,431.47 796.66,430.91 797.72,430.35 798.77,429.78 799.83,429.20 800.88,428.61 801.94,428.01 803.00,427.40 804.05,426.78 805.11,426.15 806.16,425.51 807.22,424.87 808.27,424.21 809.33,423.55 810.38,422.88 811.43,422.19 812.49,421.50 813.54,420.81 814.60,420.10 815.65,419.38 816.71,418.66 817.76,417.92 818.82,417.18 819.88,416.43 820.93,415.67 821.99,414.91 823.04,414.13 824.10,413.35 825.15,412.56 826.21,411.76 827.26,410.95 828.32,410.14 829.37,409.32 830.42,408.49 831.48,407.65 832.53,406.80 833.59,405.95 834.64,405.09 835.70,404.22 836.75,403.34 837.81,402.46 838.87,401.57 839.92,400.67 840.98,399.77 842.03,398.86 843.09,397.94 844.14,397.01 845.19,396.08 846.25,395.14 847.31,394.19 848.36,393.24 849.41,392.27 850.47,391.31 851.52,390.33 852.58,389.35 853.63,388.37 854.69,387.37 855.75,386.37 856.80,385.37 857.86,384.36 858.91,383.34 859.96,382.31 861.02,381.28 862.08,380.25 863.13,379.21 864.18,378.16 865.24,377.10 866.30,376.04 867.35,374.98 868.40,373.91 869.46,372.83 870.51,371.75 871.57,370.66 872.62,369.57 873.68,368.47 874.74,367.37 875.79,366.26 876.85,365.14 877.90,364.02 878.95,362.90 880.01,361.77 881.07,360.64 882.12,359.50 883.17,358.35 884.23,357.20 885.29,356.05 886.34,354.89 887.39,353.73 888.45,352.56 889.50,351.39 890.56,350.22 891.62,349.04 892.67,347.85 893.73,346.66 894.78,345.47 895.84,344.27 896.89,343.07 897.94,341.86 899.00,340.65" fill="none" stroke="#8e44ad" stroke-width="1.2" stroke-dasharray="3,1.8"/><polyline points="582.50,335.25 583.55,336.39 584.61,337.52 585.66,338.65 586.72,339.77 587.77,340.89 588.83,342.01 589.88,343.11 590.94,344.22 592.00,345.32 593.05,346.41 594.11,347.50 595.16,348.58 596.22,349.66 597.27,350.74 598.33,351.80 599.38,352.87 600.43,353.93 601.49,354.98 602.54,356.03 603.60,357.07 604.65,358.10 605.71,359.13 606.76,360.16 607.82,361.18 608.88,362.19 609.93,363.20 610.99,364.20 612.04,365.20 613.10,366.19 614.15,367.18 615.21,368.16 616.26,369.13 617.32,370.10 618.37,371.06 619.42,372.01 620.48,372.96 621.53,373.90 622.59,374.84 623.64,375.77 624.70,376.69 625.75,377.61 626.81,378.52 627.87,379.42 628.92,380.32 629.98,381.21 631.03,382.09 632.09,382.97 633.14,383.84 634.20,384.70 635.25,385.56 636.30,386.41 637.36,387.25 638.41,388.09 639.47,388.92 640.52,389.74 641.58,390.55 642.63,391.36 643.69,392.16 644.75,392.95 645.80,393.74 646.86,394.51 647.91,395.29 648.97,396.05 650.02,396.80 651.08,397.55 652.13,398.29 653.18,399.02 654.24,399.75 655.29,400.47 656.35,401.18 657.40,401.88 658.46,402.57 659.51,403.26 660.57,403.93 661.62,404.60 662.68,405.27 663.74,405.92 664.79,406.57 665.85,407.20 666.90,407.83 667.96,408.46 669.01,409.07 670.07,409.67 671.12,410.27 672.17,410.86 673.23,411.44 674.28,412.01 675.34,412.57 676.39,413.13 677.45,413.67 678.50,414.21 679.56,414.74 680.62,415.26 681.67,415.77 682.73,416.27 683.78,416.76 684.84,417.25 685.89,417.73 686.94,418.19 688.00,418.65 689.06,419.10 690.11,419.54 691.16,419.97 692.22,420.40 693.27,420.81 694.33,421.22 695.38,421.61 696.44,422.00 697.50,422.38 698.55,422.75 699.61,423.11 700.66,423.46 701.72,423.80 702.77,424.13 703.83,424.45 704.88,424.77 705.93,425.07 706.99,425.37 708.04,425.65 709.10,425.93 710.15,426.19 711.21,426.45 712.26,426.70 713.32,426.94 714.38,427.17 715.43,427.39 716.49,427.60 717.54,427.80 718.60,427.99 719.65,428.18 720.71,428.35 721.76,428.51 722.82,428.67 723.87,428.81 724.92,428.95 725.98,429.07 727.03,429.19 728.09,429.30 729.14,429.39 730.20,429.48 731.25,429.56 732.31,429.63 733.37,429.69 734.42,429.73 735.48,429.77 736.53,429.80 737.59,429.83 738.64,429.84 739.69,429.84 740.75,429.83 741.81,429.81 742.86,429.79 743.91,429.75 744.97,429.70 746.02,429.65 747.08,429.58 748.13,429.51 749.19,429.42 750.25,429.33 751.30,429.23 752.36,429.11 753.41,428.99 754.47,428.86 755.52,428.72 756.58,428.57 757.63,428.41 758.68,428.24 759.74,428.06 760.79,427.87 761.85,427.67 762.90,427.47 763.96,427.25 765.01,427.03 766.07,426.79 767.12,426.55 768.18,426.29 769.24,426.03 770.29,425.76 771.35,425.48 772.40,425.19 773.46,424.89 774.51,424.58 775.57,424.26 776.62,423.93 777.67,423.60 778.73,423.25 779.78,422.90 780.84,422.54 781.89,422.16 782.95,421.78 784.00,421.39 785.06,420.99 786.12,420.59 787.17,420.17 788.23,419.74 789.28,419.31 790.34,418.87 791.39,418.41 792.44,417.95 793.50,417.48 794.56,417.01 795.61,416.52 796.66,416.02 797.72,415.52 798.77,415.01 799.83,414.49 800.88,413.96 801.94,413.42 803.00,412.88 804.05,412.32 805.11,411.76 806.16,411.19 807.22,410.61 808.27,410.02 809.33,409.43 810.38,408.82 811.43,408.21 812.49,407.59 813.54,406.96 814.60,406.33 815.65,405.68 816.71,405.03 817.76,404.37 818.82,403.71 819.88,403.03 820.93,402.35 821.99,401.66 823.04,400.96 824.10,400.25 825.15,399.54 826.21,398.82 827.26,398.09 828.32,397.36 829.37,396.61 830.42,395.86 831.48,395.10 832.53,394.34 833.59,393.57 834.64,392.79 835.70,392.00 836.75,391.21 837.81,390.41 838.87,389.60 839.92,388.78 840.98,387.96 842.03,387.13 843.09,386.30 844.14,385.46 845.19,384.61 846.25,383.75 847.31,382.89 848.36,382.02 849.41,381.15 850.47,380.26 851.52,379.38 852.58,378.48 853.63,377.58 854.69,376.67 855.75,375.76 856.80,374.84 857.86,373.91 858.91,372.98 859.96,372.04 861.02,371.10 862.08,370.15 863.13,369.19 864.18,368.23 865.24,367.26 866.30,366.29 867.35,365.31 868.40,364.33 869.46,363.34 870.51,362.34 871.57,361.34 872.62,360.33 873.68,359.32 874.74,358.30 875.79,357.28 876.85,356.25 877.90,355.21 878.95,354.17 880.01,353.13 881.07,352.08 882.12,351.02 883.17,349.96 884.23,348.90 885.29,347.83 886.34,346.75 887.39,345.67 888.45,344.59 889.50,343.50 890.56,342.40 891.62,341.31 892.67,340.20 893.73,339.09 894.78,337.98 895.84,336.86 896.89,335.74 897.94,334.62 899.00,333.49" fill="none" stroke="#16a085" stroke-width="1.2" stroke-dasharray="3,1.8"/><polyline points="582.50,352.40 740.75,569.30 899.00,352.40" fill="none" stroke="#2a7ab8" stroke-width="2.4"/><polyline points="582.50,328.14 583.55,329.20 584.61,330.27 585.66,331.32 586.72,332.38 587.77,333.43 588.83,334.47 589.88,335.51 590.94,336.54 592.00,337.57 593.05,338.59 594.11,339.61 595.16,340.62 596.22,341.63 597.27,342.63 598.33,343.63 599.38,344.62 600.43,345.61 601.49,346.59 602.54,347.56 603.60,348.53 604.65,349.50 605.71,350.46 606.76,351.41 607.82,352.36 608.88,353.30 609.93,354.24 610.99,355.17 612.04,356.09 613.10,357.01 614.15,357.92 615.21,358.83 616.26,359.73 617.32,360.63 618.37,361.52 619.42,362.40 620.48,363.28 621.53,364.15 622.59,365.01 623.64,365.87 624.70,366.72 625.75,367.57 626.81,368.41 627.87,369.24 628.92,370.07 629.98,370.89 631.03,371.70 632.09,372.51 633.14,373.31 634.20,374.11 635.25,374.89 636.30,375.67 637.36,376.45 638.41,377.22 639.47,377.98 640.52,378.73 641.58,379.48 642.63,380.22 643.69,380.95 644.75,381.68 645.80,382.40 646.86,383.11 647.91,383.81 648.97,384.51 650.02,385.20 651.08,385.89 652.13,386.56 653.18,387.23 654.24,387.90 655.29,388.55 656.35,389.20 657.40,389.84 658.46,390.47 659.51,391.10 660.57,391.71 661.62,392.32 662.68,392.93 663.74,393.52 664.79,394.11 665.85,394.69 666.90,395.26 667.96,395.83 669.01,396.39 670.07,396.94 671.12,397.48 672.17,398.01 673.23,398.54 674.28,399.06 675.34,399.57 676.39,400.07 677.45,400.56 678.50,401.05 679.56,401.53 680.62,402.00 681.67,402.46 682.73,402.92 683.78,403.36 684.84,403.80 685.89,404.23 686.94,404.66 688.00,405.07 689.06,405.48 690.11,405.88 691.16,406.27 692.22,406.65 693.27,407.02 694.33,407.39 695.38,407.74 696.44,408.09 697.50,408.43 698.55,408.76 699.61,409.09 700.66,409.40 701.72,409.71 702.77,410.01 703.83,410.30 704.88,410.58 705.93,410.85 706.99,411.12 708.04,411.38 709.10,411.62 710.15,411.86 711.21,412.09 712.26,412.32 713.32,412.53 714.38,412.74 715.43,412.93 716.49,413.12 717.54,413.30 718.60,413.47 719.65,413.63 720.71,413.79 721.76,413.93 722.82,414.07 723.87,414.20 724.92,414.32 725.98,414.43 727.03,414.53 728.09,414.63 729.14,414.71 730.20,414.79 731.25,414.86 732.31,414.92 733.37,414.97 734.42,415.01 735.48,415.04 736.53,415.07 737.59,415.08 738.64,415.09 739.69,415.09 740.75,415.08 741.81,415.06 742.86,415.03 743.91,415.00 744.97,414.95 746.02,414.90 747.08,414.84 748.13,414.77 749.19,414.69 750.25,414.60 751.30,414.51 752.36,414.40 753.41,414.29 754.47,414.17 755.52,414.04 756.58,413.90 757.63,413.75 758.68,413.60 759.74,413.43 760.79,413.26 761.85,413.08 762.90,412.89 763.96,412.69 765.01,412.48 766.07,412.27 767.12,412.04 768.18,411.81 769.24,411.57 770.29,411.32 771.35,411.07 772.40,410.80 773.46,410.53 774.51,410.24 775.57,409.95 776.62,409.65 777.67,409.35 778.73,409.03 779.78,408.71 780.84,408.38 781.89,408.04 782.95,407.69 784.00,407.33 785.06,406.97 786.12,406.59 787.17,406.21 788.23,405.82 789.28,405.43 790.34,405.02 791.39,404.61 792.44,404.19 793.50,403.76 794.56,403.32 795.61,402.88 796.66,402.42 797.72,401.96 798.77,401.50 799.83,401.02 800.88,400.54 801.94,400.04 803.00,399.54 804.05,399.04 805.11,398.52 806.16,398.00 807.22,397.47 808.27,396.93 809.33,396.39 810.38,395.83 811.43,395.27 812.49,394.70 813.54,394.13 814.60,393.55 815.65,392.96 816.71,392.36 817.76,391.75 818.82,391.14 819.88,390.52 820.93,389.89 821.99,389.26 823.04,388.62 824.10,387.97 825.15,387.32 826.21,386.65 827.26,385.98 828.32,385.31 829.37,384.62 830.42,383.93 831.48,383.24 832.53,382.53 833.59,381.82 834.64,381.10 835.70,380.38 836.75,379.65 837.81,378.91 838.87,378.16 839.92,377.41 840.98,376.65 842.03,375.89 843.09,375.12 844.14,374.34 845.19,373.56 846.25,372.77 847.31,371.97 848.36,371.17 849.41,370.36 850.47,369.54 851.52,368.72 852.58,367.89 853.63,367.06 854.69,366.22 855.75,365.37 856.80,364.52 857.86,363.66 858.91,362.79 859.96,361.92 861.02,361.05 862.08,360.16 863.13,359.28 864.18,358.38 865.24,357.48 866.30,356.58 867.35,355.67 868.40,354.75 869.46,353.83 870.51,352.90 871.57,351.97 872.62,351.03 873.68,350.08 874.74,349.13 875.79,348.18 876.85,347.22 877.90,346.25 878.95,345.28 880.01,344.31 881.07,343.32 882.12,342.34 883.17,341.35 884.23,340.35 885.29,339.35 886.34,338.34 887.39,337.33 888.45,336.31 889.50,335.29 890.56,334.27 891.62,333.24 892.67,332.20 893.73,331.16 894.78,330.11 895.84,329.06 896.89,328.01 897.94,326.95 899.00,325.89" fill="none" stroke="#d35400" stroke-width="2.3" stroke-dasharray="7.5,3.5"/><circle cx="779.5" cy="409.3" r="5" fill="#d35400" stroke="#000" stroke-width="1.5"/><text x="578.3" y="297.12" text-anchor="end" font-size="10.4" fill="#000">40,00</text><text x="578.3" y="354.96" text-anchor="end" font-size="10.4" fill="#000">20,00</text><text x="578.3" y="470.64" text-anchor="end" font-size="10.4" fill="#000">-20,00</text><text x="578.3" y="528.48" text-anchor="end" font-size="10.4" fill="#000">-40,00</text><text x="578.3" y="586.32" text-anchor="end" font-size="10.4" fill="#000">-60,00</text><polygon points="552,402 577.5,402 584,409 577.5,416 552,416" fill="#a8d8e8"/><text x="554.2" y="413.2" font-size="10.4" fill="#333">0,00</text><text transform="translate(579.30,596.2) rotate(31)" font-size="11" letter-spacing="-0.6" fill="#000">2665,00</text><text transform="translate(610.95,596.2) rotate(31)" font-size="11" letter-spacing="-0.6" fill="#000">2680,00</text><text transform="translate(642.60,596.2) rotate(31)" font-size="11" letter-spacing="-0.6" fill="#000">2695,00</text><text transform="translate(674.25,596.2) rotate(31)" font-size="11" letter-spacing="-0.6" fill="#000">2710,00</text><text transform="translate(705.90,596.2) rotate(31)" font-size="11" letter-spacing="-0.6" fill="#000">2725,00</text><text transform="translate(737.55,596.2) rotate(31)" font-size="11" letter-spacing="-0.6" fill="#000">2740,00</text><text transform="translate(769.20,596.2) rotate(31)" font-size="11" letter-spacing="-0.6" fill="#000">2755,00</text><text transform="translate(800.85,596.2) rotate(31)" font-size="11" letter-spacing="-0.6" fill="#000">2770,00</text><text transform="translate(832.50,596.2) rotate(31)" font-size="11" letter-spacing="-0.6" fill="#000">2785,00</text><text transform="translate(864.15,596.2) rotate(31)" font-size="11" letter-spacing="-0.6" fill="#000">2800,00</text><text transform="translate(895.80,596.2) rotate(31)" font-size="11" letter-spacing="-0.6" fill="#000">2815,00</text><polygon points="779.5,582.5 786.3,588.8 801,588.8 801,603 757.8,603 757.8,588.8 772.8,588.8" fill="#a8d8e8"/><text x="760" y="599.3" font-size="10.65" fill="#333">2758,25</text><text x="741.6" y="635.2" text-anchor="middle" font-size="11.4" fill="#000">Future Price</text><text transform="translate(533.4,438) rotate(-90)" text-anchor="middle" font-size="12.3" fill="#000">Expected Return (Ticks)</text><text x="735.4" y="233.3" text-anchor="middle" font-size="12.1" font-weight="bold" letter-spacing="0.22" fill="#000">E1CX8 2740 Long Straddle</text><line x1="589.2" y1="259" x2="610.6" y2="259" stroke="#2a7ab8" stroke-width="2" stroke-dasharray="none"/><text x="616.2" y="264" font-size="11" fill="#000">B/E</text><line x1="647.9" y1="259" x2="669.7" y2="259" stroke="#d35400" stroke-width="2" stroke-dasharray="6,2"/><text x="674.9" y="264" font-size="11.2" fill="#000">Current</text><line x1="725.8" y1="259" x2="748.2" y2="259" stroke="#16a085" stroke-width="2" stroke-dasharray="6,2"/><text x="752.9" y="264" font-size="11" fill="#000">+1</text><line x1="780.1" y1="259" x2="801.9" y2="259" stroke="#8e44ad" stroke-width="2" stroke-dasharray="6,2"/><text x="807" y="264" font-size="11" fill="#000">+2</text><line x1="834" y1="259" x2="856" y2="259" stroke="#c0392b" stroke-width="2" stroke-dasharray="6,2"/><text x="861" y="264" font-size="11" fill="#000">+4</text><g><rect x="945.5" y="211.5" width="12" height="10" fill="#eef4fc" stroke="#6a8cc8"/><rect x="946" y="212" width="11" height="2.5" fill="#9ab8e8"/><rect x="948.5" y="215.5" width="12" height="10" fill="#f4f8fc" stroke="#6a8cc8"/><rect x="949" y="216" width="11" height="2.5" fill="#9ab8e8"/></g></svg>
</body></html>
